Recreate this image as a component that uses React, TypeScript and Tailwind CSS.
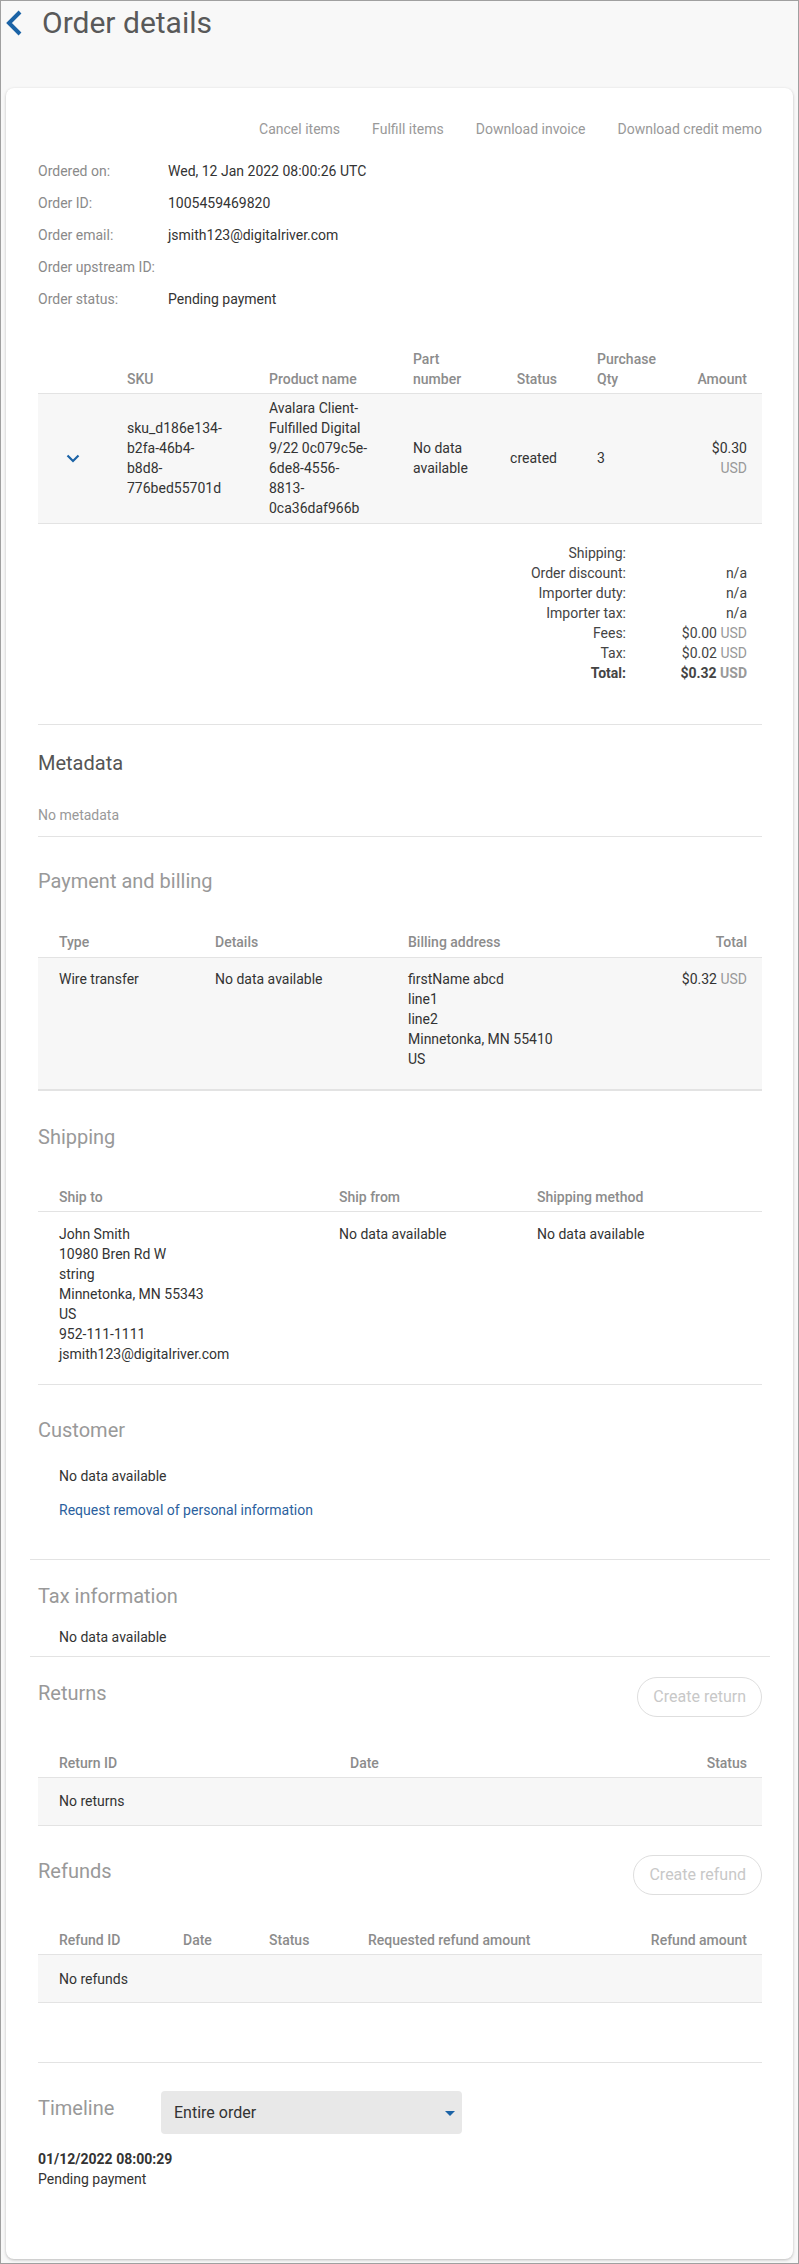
import React from "react";

const Heading = ({ children, dark }: { children: React.ReactNode; dark?: boolean }) => (
  <div className={`text-[20px] leading-[28px] ${dark ? "text-[#555]" : "text-[#999]"}`}>{children}</div>
);

const Usd = () => <span className="text-[#999]">USD</span>;

const info: [string, string][] = [
  ["Ordered on:", "Wed, 12 Jan 2022 08:00:26 UTC"],
  ["Order ID:", "1005459469820"],
  ["Order email:", "jsmith123@digitalriver.com"],
  ["Order upstream ID:", ""],
  ["Order status:", "Pending payment"],
];

const summary: [string, React.ReactNode, boolean?][] = [
  ["Shipping:", ""],
  ["Order discount:", "n/a"],
  ["Importer duty:", "n/a"],
  ["Importer tax:", "n/a"],
  ["Fees:", <>$0.00 <Usd /></>],
  ["Tax:", <>$0.02 <Usd /></>],
  ["Total:", <>$0.32 <Usd /></>, true],
];

const Lines = ({ lines }: { lines: string[] }) => (
  <div>
    {lines.map((l, i) => (
      <div key={i}>{l}</div>
    ))}
  </div>
);

const PillButton = ({ label }: { label: string }) => (
  <button className="h-[40px] px-[15px] rounded-full border border-[#dedede] text-[16px] text-[#c8c8c8] bg-white">
    {label}
  </button>
);

export default function App() {
  return (
    <div className="w-[799px] h-[2264px] box-border border border-[#a0a0a0] bg-[#f8f8f8] flex flex-col font-['Roboto',sans-serif] text-[14px] leading-5 text-[#333]">
      {/* page header */}
      <div className="flex items-center pt-[4px] pl-[3px]">
        <svg width="20" height="28" viewBox="0 0 20 28" className="text-[#1b63a6]">
          <path d="M16 3 L5 14 L16 25" fill="none" stroke="currentColor" strokeWidth="4" />
        </svg>
        <h1 className="ml-[18px] text-[30px] leading-[36px] text-[#595959]">Order details</h1>
      </div>

      <div className="flex-1 mt-[47px] mx-[5px] mb-[4px] bg-white rounded-[8px] shadow-[0_1px_3px_rgba(0,0,0,0.25)] pt-[31px] pl-[32px] pr-[31px]">
        {/* actions */}
        <div className="flex justify-end gap-[32px] text-[#999]">
          <span>Cancel items</span>
          <span>Fulfill items</span>
          <span>Download invoice</span>
          <span>Download credit memo</span>
        </div>

        {/* order info */}
        <div className="mt-[22px] flex flex-col gap-3">
          {info.map(([k, v]) => (
            <div key={k} className="flex">
              <div className="w-[130px] text-[#8a8a8a]">{k}</div>
              <div>{v}</div>
            </div>
          ))}
        </div>

        {/* items table */}
        <div className="mt-[40px]">
          <div className="grid grid-cols-[89px_142px_144px_70px_74px_123px_1fr] items-end pb-[4px] border-b border-[#e3e3e3] text-[#8c8c8c] font-medium">
            <div></div>
            <div>SKU</div>
            <div>Product name</div>
            <div>Part<br />number</div>
            <div className="text-right">Status</div>
            <div className="pl-[40px]">Purchase<br />Qty</div>
            <div className="text-right pr-[15px]">Amount</div>
          </div>
          <div className="grid grid-cols-[89px_142px_144px_70px_74px_123px_1fr] items-center pt-[4px] pb-[5px] bg-[#f7f7f7] border-b border-[#e3e3e3]">
            <div className="pl-[28px]">
              <svg width="14" height="9" viewBox="0 0 14 9" className="text-[#1b63a6]">
                <path d="M1.5 1.5 L7 7 L12.5 1.5" fill="none" stroke="currentColor" strokeWidth="2.2" />
              </svg>
            </div>
            <Lines lines={["sku_d186e134-", "b2fa-46b4-", "b8d8-", "776bed55701d"]} />
            <Lines lines={["Avalara Client-", "Fulfilled Digital", "9/22 0c079c5e-", "6de8-4556-", "8813-", "0ca36daf966b"]} />
            <Lines lines={["No data", "available"]} />
            <div className="text-right">created</div>
            <div className="pl-[40px]">3</div>
            <div className="text-right pr-[15px]">
              <div>$0.30</div>
              <div className="text-[#999]">USD</div>
            </div>
          </div>
        </div>

        {/* summary */}
        <div className="mt-[19px] flex justify-end pr-[15px]">
          <div className="grid grid-cols-[auto_121px] text-[#444]">
            {summary.map(([k, v, bold]) => (
              <React.Fragment key={k}>
                <div className={`text-right ${bold ? "font-bold" : ""}`}>{k}</div>
                <div className={`text-right ${bold ? "font-bold" : ""}`}>{v}</div>
              </React.Fragment>
            ))}
          </div>
        </div>

        <div className="mt-[41px] h-px bg-[#e3e3e3]" />

        {/* metadata */}
        <div className="mt-[24px]">
          <Heading dark>Metadata</Heading>
        </div>
        <div className="mt-[28px] text-[#999]">No metadata</div>
        <div className="mt-[11px] h-px bg-[#e3e3e3]" />

        {/* payment */}
        <div className="mt-[30px]">
          <Heading>Payment and billing</Heading>
        </div>
        <div className="mt-[37px]">
          <div className="grid grid-cols-[177px_193px_1fr_120px] pb-[5px] border-b border-[#e3e3e3] text-[#8c8c8c] font-medium">
            <div className="pl-[21px]">Type</div>
            <div>Details</div>
            <div>Billing address</div>
            <div className="text-right pr-[15px]">Total</div>
          </div>
          <div className="grid grid-cols-[177px_193px_1fr_120px] pt-[11px] pb-[20px] bg-[#f7f7f7] border-b-2 border-[#e3e3e3]">
            <div className="pl-[21px]">Wire transfer</div>
            <div>No data available</div>
            <Lines lines={["firstName abcd", "line1", "line2", "Minnetonka, MN 55410", "US"]} />
            <div className="text-right pr-[15px]">
              $0.32 <Usd />
            </div>
          </div>
        </div>

        {/* shipping */}
        <div className="mt-[32px]">
          <Heading>Shipping</Heading>
        </div>
        <div className="mt-[36px]">
          <div className="grid grid-cols-[301px_198px_1fr] pb-[4px] border-b border-[#e3e3e3] text-[#8c8c8c] font-medium">
            <div className="pl-[21px]">Ship to</div>
            <div>Ship from</div>
            <div>Shipping method</div>
          </div>
          <div className="grid grid-cols-[301px_198px_1fr] pt-[12px] pb-[20px] border-b border-[#e3e3e3]">
            <div className="pl-[21px]">
              <Lines
                lines={[
                  "John Smith",
                  "10980 Bren Rd W",
                  "string",
                  "Minnetonka, MN 55343",
                  "US",
                  "952-111-1111",
                  "jsmith123@digitalriver.com",
                ]}
              />
            </div>
            <div>No data available</div>
            <div>No data available</div>
          </div>
        </div>

        {/* customer */}
        <div className="mt-[31px]">
          <Heading>Customer</Heading>
        </div>
        <div className="mt-[22px] pl-[21px]">No data available</div>
        <div className="mt-[14px] pl-[21px] text-[#2b5f9e]">Request removal of personal information</div>
        <div className="mt-[39px] -mx-[8px] h-px bg-[#e3e3e3]" />

        {/* tax */}
        <div className="mt-[22px]">
          <Heading>Tax information</Heading>
        </div>
        <div className="mt-[17px] pl-[21px]">No data available</div>
        <div className="mt-[9px] -mx-[8px] h-px bg-[#e3e3e3]" />

        {/* returns */}
        <div className="mt-[20px] flex justify-between items-start">
          <div className="mt-[2px]">
            <Heading>Returns</Heading>
          </div>
          <PillButton label="Create return" />
        </div>
        <div className="mt-[36px]">
          <div className="grid grid-cols-[312px_1fr_120px] pb-[4px] border-b border-[#e3e3e3] text-[#8c8c8c] font-medium">
            <div className="pl-[21px]">Return ID</div>
            <div>Date</div>
            <div className="text-right pr-[15px]">Status</div>
          </div>
          <div className="pt-[13px] pb-[14px] pl-[21px] bg-[#f7f7f7] border-b border-[#e3e3e3]">No returns</div>
        </div>

        {/* refunds */}
        <div className="mt-[29px] flex justify-between items-start">
          <div className="mt-[2px]">
            <Heading>Refunds</Heading>
          </div>
          <PillButton label="Create refund" />
        </div>
        <div className="mt-[35px]">
          <div className="grid grid-cols-[145px_86px_99px_1fr_140px] pb-[4px] border-b border-[#e3e3e3] text-[#8c8c8c] font-medium">
            <div className="pl-[21px]">Refund ID</div>
            <div>Date</div>
            <div>Status</div>
            <div>Requested refund amount</div>
            <div className="text-right pr-[15px]">Refund amount</div>
          </div>
          <div className="pt-[14px] pb-[13px] pl-[21px] bg-[#f7f7f7] border-b border-[#e3e3e3]">No refunds</div>
        </div>

        <div className="mt-[59px] h-px bg-[#e3e3e3]" />

        {/* timeline */}
        <div className="mt-[28px] flex items-start">
          <div className="w-[123px] mt-[3px]">
            <Heading>Timeline</Heading>
          </div>
          <div className="w-[301px] h-[43px] rounded-[4px] bg-[#e8e8e8] flex items-center justify-between pl-[13px] pr-[7px]">
            <span className="text-[16px] text-[#333]">Entire order</span>
            <svg width="10" height="6" viewBox="0 0 10 6" className="text-[#1b63a6] mt-[2px]">
              <path d="M0 0 L10 0 L5 5 Z" fill="currentColor" />
            </svg>
          </div>
        </div>
        <div className="mt-[15px] font-bold">01/12/2022 08:00:29</div>
        <div>Pending payment</div>
      </div>
    </div>
  );
}
